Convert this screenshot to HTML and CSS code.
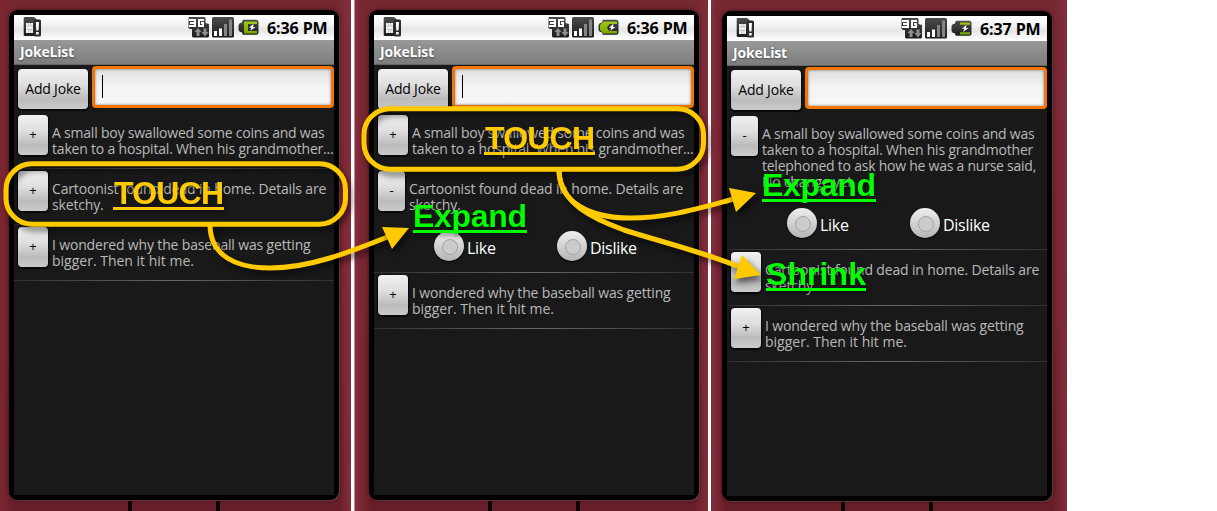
FILE: index.html
```html
<!DOCTYPE html>
<html lang="en">
<head>
<meta charset="utf-8">
<title>JokeList</title>
<link rel="stylesheet" href="styles.css">
</head>
<body>
<svg class="defs" width="0" height="0" aria-hidden="true">
  <defs>
    <linearGradient id="dark" x1="0" y1="0" x2="0" y2="1"><stop offset="0" stop-color="#4c4c4c"/><stop offset="1" stop-color="#1c1c1c"/></linearGradient>
    <linearGradient id="green" x1="0" y1="0" x2="0" y2="1"><stop offset="0" stop-color="#9fc814"/><stop offset="1" stop-color="#78a800"/></linearGradient>
    <symbol id="sim" viewBox="0 0 18 20">
      <path d="M1.500 0H11l4.500 4V19h-14l-.8-.8V.8z" fill="url(#dark)"/>
      <path d="M3 6h7v10H3z" fill="#f4f4f4"/>
      <path d="M5.500 6v3M7.800 6v3M5.500 12v4M7.800 12v4M3 9h7M3 12.300h7" stroke="#aaa" stroke-width=".6"/>
      <rect x="11" y="2.500" width="7" height="17" rx="1.500" fill="#2b2b2b"/>
      <path d="M12.800 5h3.200l-.5 8.500h-2.200zM13.100 15h2.600v2.600h-2.600z" fill="#fff"/>
    </symbol>
    <symbol id="net" viewBox="0 0 22 21">
      <path d="M1 0h15.500l1 1V6l3.500 1v12.500l-1 1H5l-1-1V12H2l-1.500-1V1z" fill="url(#dark)"/>
      <path d="M1 2h6v2H1zM2 5h5v2H2zM1 8h6v2H1zM6 2h2v8H6z" fill="#fff"/>
      <path d="M10 2h6v2h-4v4h2V7h-1V5h3v5h-6z" fill="#fff"/>
      <path d="M6.500 15l3.500-4 3.500 4h-2v4H8.500v-4zM13.500 15h2v-3.500h3V15h2L17 19.500z" fill="#8d8d8d"/>
    </symbol>
    <symbol id="signal" viewBox="0 0 22 21">
      <rect width="22" height="20.500" rx="1.500" fill="url(#dark)"/>
      <path d="M2 14h3v5H2zM7 11.500h3V19H7z" fill="#fff"/>
      <path d="M12 7h3v12h-3zM17 2.500h3V19h-3z" fill="#858585"/>
    </symbol>
    <symbol id="battery" viewBox="0 0 21 17">
      <path d="M5 .8h13q2.500 0 2.500 2.500v10q0 2.500-2.500 2.500H5L3.500 13H2L.5 11V6l1.500-2h1.500z" fill="url(#dark)"/>
    </symbol>
    <symbol id="bolt" viewBox="0 0 21 17"><path d="M15.500 4.800l-4.500 4h2.500l-1.500 3.200 5.500-4h-2.500z" fill="#fff"/></symbol>
  </defs>
</svg>

<main class="board">
  <section class="phone first">
    <div class="bezel"><div class="screen">
      <div class="status">
        <svg class="sim"><use href="#sim"/></svg>
        <svg class="net"><use href="#net"/></svg>
        <svg class="signal"><use href="#signal"/></svg>
        <svg class="battery" viewBox="0 0 21 17"><use href="#battery"/><path d="M6 2.500h13V5h-9v7h9v2.500H6z" fill="url(#green)"/><use href="#bolt"/></svg>
        <span class="clock">6:36 PM</span>
      </div>
      <div class="title"><span>JokeList</span></div>
      <div class="entry"><div class="btn add"><span>Add Joke</span></div><div class="field"><i class="caret"></i></div></div>
      <div class="joke">
        <div class="btn toggle">+</div>
        <p><span class="a1">A small boy swallowed some coins and was</span><span class="a2">taken to a hospital. When his grandmother...</span></p>
      </div>
      <div class="joke">
        <div class="btn toggle">+</div>
        <p><span class="b1">Cartoonist found dead in home. Details are</span><span class="b2">sketchy.</span></p>
      </div>
      <div class="joke">
        <div class="btn toggle">+</div>
        <p><span class="c1">I wondered why the baseball was getting</span><span class="c2">bigger. Then it hit me.</span></p>
      </div>
    </div></div>
    <div class="keys"><i></i><i></i></div>
  </section>

  <section class="phone second">
    <div class="bezel"><div class="screen">
      <div class="status">
        <svg class="sim"><use href="#sim"/></svg>
        <svg class="net"><use href="#net"/></svg>
        <svg class="signal"><use href="#signal"/></svg>
        <svg class="battery" viewBox="0 0 21 17"><use href="#battery"/><path d="M5.500 2.500H19V5h-7.500L9 8.500l2 3.500h8v2.500H5.500L2 11V6z" fill="url(#green)"/><use href="#bolt"/></svg>
        <span class="clock">6:36 PM</span>
      </div>
      <div class="title"><span>JokeList</span></div>
      <div class="entry"><div class="btn add"><span>Add Joke</span></div><div class="field"><i class="caret"></i></div></div>
      <div class="joke">
        <div class="btn toggle">+</div>
        <p><span class="a1">A small boy swallowed some coins and was</span><span class="a2">taken to a hospital. When his grandmother...</span></p>
      </div>
      <div class="joke open">
        <div class="line">
          <div class="btn toggle">-</div>
          <p><span class="b1">Cartoonist found dead in home. Details are</span><span class="b2">sketchy.</span></p>
        </div>
        <div class="votes"><div class="vote"><i class="radio"></i><span class="like">Like</span></div><div class="vote"><i class="radio"></i><span class="dislike">Dislike</span></div></div>
      </div>
      <div class="joke">
        <div class="btn toggle">+</div>
        <p><span class="c1">I wondered why the baseball was getting</span><span class="c2">bigger. Then it hit me.</span></p>
      </div>
    </div></div>
    <div class="keys"><i></i><i></i></div>
  </section>

  <section class="phone third">
    <div class="bezel"><div class="screen">
      <div class="status">
        <svg class="sim"><use href="#sim"/></svg>
        <svg class="net"><use href="#net"/></svg>
        <svg class="signal"><use href="#signal"/></svg>
        <svg class="battery" viewBox="0 0 21 17"><use href="#battery"/><path d="M9 2.500h10v2.300H9zM9 12.200h10v2.300H9z" fill="url(#green)"/><use href="#bolt"/></svg>
        <span class="clock">6:37 PM</span>
      </div>
      <div class="title"><span>JokeList</span></div>
      <div class="entry"><div class="btn add"><span>Add Joke</span></div><div class="field"></div></div>
      <div class="joke open">
        <div class="line">
          <div class="btn toggle">-</div>
          <p><span class="a1">A small boy swallowed some coins and was</span><span class="a3">taken to a hospital. When his grandmother</span><span class="a4">telephoned to ask how he was a nurse said,</span><span class="a5">No change yet.</span></p>
        </div>
        <div class="votes"><div class="vote"><i class="radio"></i><span class="like">Like</span></div><div class="vote"><i class="radio"></i><span class="dislike">Dislike</span></div></div>
      </div>
      <div class="joke">
        <div class="btn toggle"></div>
        <p><span class="b1">Cartoonist found dead in home. Details are</span><span class="b2">sketchy.</span></p>
      </div>
      <div class="joke">
        <div class="btn toggle">+</div>
        <p><span class="c1">I wondered why the baseball was getting</span><span class="c2">bigger. Then it hit me.</span></p>
      </div>
    </div></div>
    <div class="keys"><i></i><i></i></div>
  </section>

  <svg class="notes" viewBox="0 0 1217 511">
    <g class="stroke">
      <path d="M210 226C211 256 236 268 270 268C310 268 350 252 390 236"/>
      <path d="M559 171C560 203 590 218 630 218C668 218 700 208 734 199"/>
      <path d="M559 171C560 204 594 219 624 230C658 241 700 251 740 267"/>
      <rect x="6" y="163.700" width="339.500" height="60.500" rx="26"/>
      <rect x="364" y="108.700" width="339.500" height="60.500" rx="26"/>
    </g>
    <g class="head">
      <path d="M409 228L382 227L392 249z"/>
      <path d="M756 193L729 188L736 212z"/>
      <path d="M761 275L742 255L734 279z"/>
    </g>
    <g class="label touch">
      <text x="114" y="204" textLength="110">TOUCH</text><rect x="113" y="207" width="111" height="3"/>
      <text x="485" y="149" textLength="110">TOUCH</text><rect x="484" y="152" width="111" height="3"/>
    </g>
    <g class="label result">
      <text x="413" y="227" textLength="114">Expand</text><rect x="413" y="230" width="114" height="3"/>
      <text x="762" y="196" textLength="114">Expand</text><rect x="762" y="199" width="114" height="3"/>
      <text x="766" y="285" textLength="100">Shrink</text><rect x="766" y="288" width="100" height="3"/>
    </g>
  </svg>
</main>
</body>
</html>
```

FILE: styles.css
```css
* { box-sizing: border-box; }
body { margin: 0; background: #fff; font-family: "Open Sans", "Noto Sans", sans-serif; overflow: hidden; }
.defs { display: block; }
i { display: block; }
.board { position: relative; display: flex; gap: 3px; width: 1217px; height: 511px; overflow: hidden; }

.phone { flex: none; height: 511px; padding-top: 10px; display: flex; flex-direction: column;
  background: linear-gradient(90deg, #843040 0, #7c2533 6px, rgba(116,36,48,0) 16px, rgba(116,36,48,0) calc(100% - 14px), #832c3a 100%), linear-gradient(#752832 0, #74242f 50%, #671e29 100%); }
.first { width: 351px; padding-left: 9px; background: linear-gradient(90deg, #7c2633 0, rgba(116,36,48,0) 14px, rgba(116,36,48,0) calc(100% - 12px), #862e3c 100%), linear-gradient(#752832 0, #74242f 50%, #671e29 100%); }
.second { width: 354px; border-left: 1px solid #c58b92; padding-left: 14px; }
.third { width: 356px; padding: 11px 0 0 11px; }
.bezel { flex: none; width: 330px; height: 490px; padding: 5px; background: #000; border-radius: 9px;
  box-shadow: 0 0 4px 0 rgba(20,0,4,.6), 1px 1px 0 0 #7d4a50; }
.screen { width: 320px; height: 480px; background: #191919; overflow: hidden; }
.keys { flex: 1; display: flex; gap: 84px; padding: 1px 0 0 119px; }
.keys i { width: 4px; height: 100%; background: #080305; }

.status { height: 25px; display: flex; align-items: flex-start; background: linear-gradient(#fff 0, #f4f4f4 35%, #e6e6e6 60%, #fff 100%); color: #000; }
.status svg { flex: none; }
.sim { width: 18px; height: 20px; margin: 2px 0 0 9px; }
.net { width: 22px; height: 21px; margin: 2px 0 0 147px; }
.signal { width: 22px; height: 21px; margin: 2px 0 0 2px; }
.battery { width: 21px; height: 17px; margin: 4px 0 0 4px; }
.clock { margin-left: 8px; font-size: 16px; font-weight: 700; line-height: 26px; letter-spacing: -.1px; white-space: nowrap; }
.title { height: 25px; padding-left: 6px; background: linear-gradient(#999, #7d7d7d); border-bottom: 1px solid #666; color: #fff; font-size: 14px; font-weight: 700; line-height: 24px; letter-spacing: -.2px; text-shadow: 0 1px 2px #444; }
.title span { white-space: nowrap; }

.entry { display: flex; height: 48px; padding: 4px 0 0 4px; }
.btn { flex: none; height: 40px; border-radius: 4px; background: linear-gradient(#f2f0f2 0, #dedede 40%, #bbb 75%, #cbcbcb 100%); box-shadow: 0 1px 1px 1px #080808; color: #000; text-align: center; }
.add { width: 70px; font-size: 14px; line-height: 40px; letter-spacing: -.2px; white-space: nowrap; }
.field { width: 242px; height: 42px; margin: -3px 0 0 4px; border: 3px solid #f27506; border-radius: 4px; background: linear-gradient(#dedede 0, #f4f3f4 45%, #f8f8f8 100%); padding: 6px 0 0 7px; box-shadow: inset 0 0 3px #777; }
.caret { width: 1px; height: 23px; background: #000; }

.joke { position: relative; display: flex; height: 56px; padding: 2px 0 0 4px; border-bottom: 1px solid transparent; border-image: linear-gradient(90deg, #303030, #686868 50%, #303030) 1; }
.toggle { width: 30px; font-size: 13px; line-height: 39px; }
.joke p { margin: 10px 0 0 4px; color: #b9b9b9; font-size: 14px; line-height: 16px; }
.joke p span { display: block; white-space: nowrap; }
.a1 { letter-spacing: -.21px; }
.a2, .a3 { letter-spacing: -.19px; }
.a4, .a5 { letter-spacing: -.24px; }
.b1, .b2, .c1 { letter-spacing: -.16px; }
.open { display: block; height: auto; }
.line { display: flex; }
.open .toggle { width: 27px; }
.votes { display: flex; padding: 18px 0 11px 56px; }
.vote { display: flex; width: 123px; height: 30px; gap: 3px; color: #fff; font-size: 16px; line-height: 34px; letter-spacing: -.28px; }
.radio { width: 30px; height: 30px; border-radius: 50%; padding: 8px; background: linear-gradient(#efefef, #d2d2d2 50%, #b5b5b5); box-shadow: 0 1px 1px #000; }
.radio::before { content: ""; display: block; width: 14px; height: 14px; border: 1px solid #a4a4a4; border-radius: 50%; background: #cbcbcb; }

.notes { position: absolute; inset: 0; width: 1217px; height: 511px; }
.stroke { fill: none; stroke: #ffcb00; stroke-width: 5; filter: drop-shadow(3px 4px 3px rgba(0,0,0,.6)); }
.head { fill: #ffcb00; filter: drop-shadow(2px 4px 3px rgba(0,0,0,.6)); }
.label { font: 700 32px "Liberation Sans", Arial, sans-serif; filter: drop-shadow(1px 2px 2px rgba(0,0,0,.5)); }
.touch { fill: #ffcb00; }
.result { fill: #0f0; }
```
